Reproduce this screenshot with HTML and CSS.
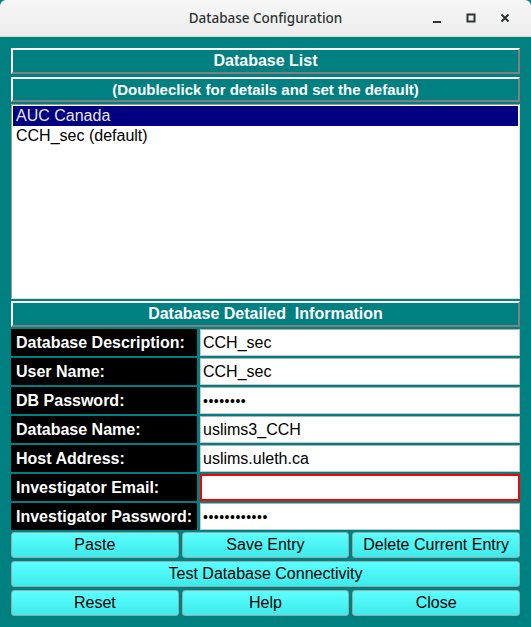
FILE: index.html
```html
<!DOCTYPE html>
<html>
<head>
<meta charset="utf-8">
<link rel="stylesheet" href="styles.css">
</head>
<body>
<div class="window">
  <div class="titlebar">
    <div class="title">Database Configuration</div>
    <div class="controls">
      <svg class="ctl" width="10" height="10" viewBox="0 0 10 10"><rect x="1" y="8" width="8" height="2" fill="#2e3436"/></svg>
      <svg class="ctl" width="10" height="10" viewBox="0 0 10 10"><rect x="1.5" y="1.5" width="7" height="7" fill="none" stroke="#2e3436" stroke-width="2"/></svg>
      <svg class="ctl" width="10" height="10" viewBox="0 0 10 10"><path d="M1.5 1.5L8.5 8.5M8.5 1.5L1.5 8.5" stroke="#2e3436" stroke-width="2"/></svg>
    </div>
  </div>
  <div class="content">
    <div class="banner">Database List</div>
    <div class="banner sub">(Doubleclick for details and set the default)</div>
    <div class="list">
      <div class="item selected">AUC Canada</div>
      <div class="item">CCH_sec (default)</div>
    </div>
    <div class="banner">Database Detailed&nbsp; Information</div>
    <div class="form">
      <div class="label">Database Description:</div><div class="value">CCH_sec</div>
      <div class="label">User Name:</div><div class="value">CCH_sec</div>
      <div class="label">DB Password:</div><div class="value dots">••••••••</div>
      <div class="label">Database Name:</div><div class="value">uslims3_CCH</div>
      <div class="label">Host Address:</div><div class="value">uslims.uleth.ca</div>
      <div class="label">Investigator Email:</div><div class="value error"></div>
      <div class="label">Investigator Password:</div><div class="value dots">••••••••••••</div>
    </div>
    <div class="buttons">
      <div class="btn">Paste</div>
      <div class="btn">Save Entry</div>
      <div class="btn">Delete Current Entry</div>
      <div class="btn wide">Test Database Connectivity</div>
      <div class="btn">Reset</div>
      <div class="btn">Help</div>
      <div class="btn">Close</div>
    </div>
  </div>
</div>
</body>
</html>
```
FILE: styles.css
```css
html, body {
  margin: 0;
  padding: 0;
  background: #008080;
}
.window {
  width: 531px;
  height: 627px;
  display: flex;
  flex-direction: column;
  background: #008080;
  font-family: "Liberation Sans", Arial, sans-serif;
}
.titlebar {
  height: 37px;
  flex: none;
  background: linear-gradient(#f6f6f6, #ededed);
  border-bottom: 1px solid #d8d8d8;
  box-sizing: border-box;
  border-radius: 6px 6px 0 0;
  position: relative;
  display: flex;
  align-items: center;
  justify-content: center;
}
.title {
  font-family: "Noto Sans", "DejaVu Sans", sans-serif;
  font-size: 13.5px;
  color: #2e3436;
  font-weight: 500;
  padding-bottom: 1px;
}
.controls {
  position: absolute;
  right: 21px;
  top: 13px;
  display: flex;
  gap: 24px;
}
.content {
  padding: 11px 11px 0 11px;
  display: flex;
  flex-direction: column;
}
.banner {
  height: 26px;
  box-sizing: border-box;
  border-style: solid;
  border-width: 2px;
  border-color: #ffffff #808080 #808080 #ffffff;
  color: #ffffff;
  font-weight: bold;
  font-size: 16px;
  display: flex;
  align-items: center;
  justify-content: center;
  margin-bottom: 3px;
}
.banner.sub {
  height: 25px;
  font-size: 15px;
  margin-bottom: 2px;
}
.list {
  height: 195px;
  box-sizing: border-box;
  background: #ffffff;
  border-style: solid;
  border-width: 1px;
  border-color: #9a9a9a #e0e0e0 #e0e0e0 #9a9a9a;
  margin-bottom: 2px;
  padding: 1px;
}
.item {
  height: 20px;
  line-height: 20px;
  font-size: 16px;
  padding-left: 3px;
  color: #000000;
}
.item.selected {
  background: #000080;
  color: #e6e6f0;
}
.form {
  display: grid;
  grid-template-columns: 186px 1fr;
  column-gap: 3px;
  row-gap: 2px;
  margin-bottom: 2px;
  margin-top: -1px;
}
.label {
  height: 27px;
  background: #000000;
  color: #ffffff;
  font-weight: bold;
  font-size: 16px;
  display: flex;
  align-items: center;
  padding-left: 5px;
}
.value {
  height: 27px;
  box-sizing: border-box;
  background: #ffffff;
  border: 1px solid #c8c8c8;
  border-top-color: #b0b0b0;
  font-size: 16px;
  color: #000000;
  display: flex;
  align-items: center;
  padding-left: 2px;
}
.value.dots {
  font-size: 14px;
  letter-spacing: 0.5px;
}
.value.error {
  border: 2px solid #ff0000;
}
.buttons {
  display: grid;
  grid-template-columns: 1fr 1fr 1fr;
  gap: 3px;
}
.btn {
  height: 26px;
  box-sizing: border-box;
  background: linear-gradient(#5cffff, #3eeaea);
  border: 1px solid #9aa8a8;
  border-radius: 3px;
  font-size: 16px;
  color: #000000;
  display: flex;
  align-items: center;
  justify-content: center;
}
.btn.wide {
  grid-column: 1 / 4;
}
```
